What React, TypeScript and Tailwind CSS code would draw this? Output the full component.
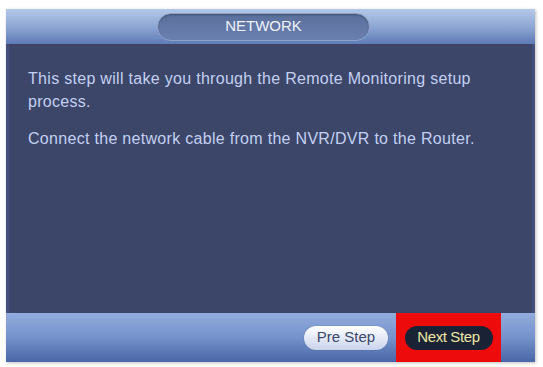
export default function App() {
  return (
    <div className="w-[543px] h-[367px] bg-white pt-[9px] pl-[6px] font-['Liberation_Sans',Arial,sans-serif]">
      <div className="w-[529px] h-[353px] flex flex-col shadow-[1px_1px_3px_rgba(0,0,0,0.25)]">
        {/* header */}
        <div className="h-[35px] flex items-center pl-[151px] bg-gradient-to-b from-[#b4c8e8] via-[#8ea7d4] to-[#5f7bb6]">
          <div className="w-[213px] h-[28px] rounded-full bg-gradient-to-b from-[#5b6f9c] to-[#6a80ae] border border-[#8da3cf] shadow-[inset_0_1px_2px_rgba(0,0,0,0.3)] flex items-center justify-center">
            <span className="text-[15px] text-[#eef2fb]">NETWORK</span>
          </div>
        </div>

        {/* body */}
        <div className="flex-1 bg-[#3b4669] border-x-[3px] border-[#44507a] pl-[19px] pr-[30px] pt-[23px] text-[16px] tracking-[0.3px] text-[#c3d0f2] leading-[23px]">
          <p>This step will take you through the Remote Monitoring setup process.</p>
          <p className="mt-[14px]">Connect the network cable from the NVR/DVR to the Router.</p>
        </div>

        {/* footer */}
        <div className="h-[49px] flex items-center justify-end bg-gradient-to-b from-[#93acdc] via-[#7592cc] to-[#4a66a6] pr-[34px]">
          <button className="w-[84px] h-[24px] rounded-full bg-gradient-to-b from-[#ffffff] to-[#c9d3ec] text-[#3b4669] text-[15px] flex items-center justify-center mr-[8px] shadow-[0_0_1px_rgba(0,0,0,0.4)]">
            Pre Step
          </button>
          <div className="w-[105px] h-[49px] bg-[#ee0b0b] flex items-center justify-center">
            <button className="w-[88px] h-[24px] rounded-full bg-[#1a2236] text-[#ede6a2] text-[15px] tracking-[-0.4px] flex items-center justify-center">
              Next Step
            </button>
          </div>
        </div>
      </div>
    </div>
  );
}
